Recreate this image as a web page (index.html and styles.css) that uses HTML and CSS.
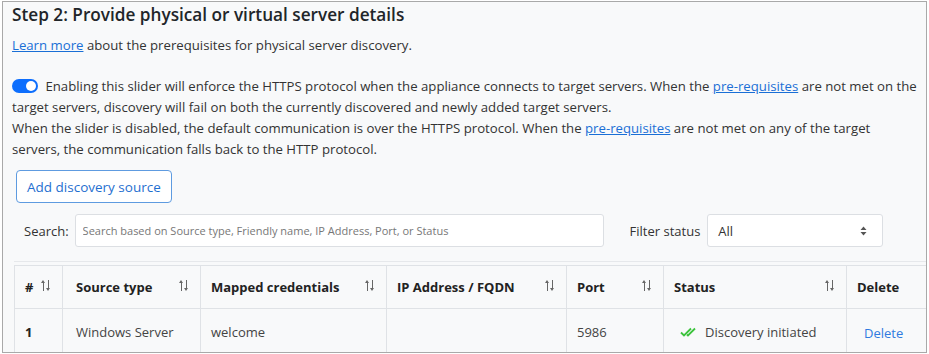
FILE: index.html
```html
<!DOCTYPE html>
<html lang="en">
<head>
    <meta charset="UTF-8">
    <title>Discovery sources</title>
    <link rel="stylesheet" href="styles.css">
</head>
<body>
    <div class="frame">
        <h2 class="step-title">Step 2: Provide physical or virtual server details</h2>
        <p class="learn"><a href="#">Learn more</a> about the prerequisites for physical server discovery.</p>

        <!-- HTTPS slider with its explanation -->
        <p class="slider-text">
            <span class="toggle"><span class="knob"></span></span>
            Enabling this slider will enforce the HTTPS protocol when the appliance connects to target servers. When the <a href="#">pre-requisites</a> are not met on the target servers, discovery will fail on both the currently discovered and newly added target servers.<br>
            When the slider is disabled, the default communication is over the HTTPS protocol. When the <a href="#">pre-requisites</a> are not met on any of the target servers, the communication falls back to the HTTP protocol.
        </p>

        <button class="add-button">Add discovery source</button>

        <div class="search-row">
            <label class="search-label">Search:</label>
            <input class="search-input" type="text" placeholder="Search based on Source type, Friendly name, IP Address, Port, or Status">
            <label class="filter-label">Filter status</label>
            <div class="filter-select">
                <span>All</span>
                <svg width="7" height="10" viewBox="0 0 7 10"><path d="M3.5 0.5 L6.5 4 H0.5 Z M3.5 9.5 L6.5 6 H0.5 Z" fill="#555"/></svg>
            </div>
        </div>

        <div class="table-wrap">
            <table class="sources">
                <thead>
                    <tr>
                        <th class="c-num"># <span class="sort"></span></th>
                        <th class="c-type">Source type <span class="sort"></span></th>
                        <th class="c-cred">Mapped credentials <span class="sort"></span></th>
                        <th class="c-ip">IP Address / FQDN <span class="sort"></span></th>
                        <th class="c-port">Port <span class="sort"></span></th>
                        <th class="c-status">Status <span class="sort"></span></th>
                        <th class="c-del">Delete</th>
                    </tr>
                </thead>
                <tbody>
                    <tr>
                        <td class="num">1</td>
                        <td class="c-type">Windows Server</td>
                        <td>welcome</td>
                        <td></td>
                        <td>5986</td>
                        <td>
                            <span class="status">
                                <svg width="20" height="10" viewBox="0 0 20 10"><path d="M1 5.5 L4 8.5 L11 1.5 M7 7.5 L8 8.5 L15 1.5" fill="none" stroke="#3cc33c" stroke-width="1.8"/></svg>
                                Discovery initiated
                            </span>
                        </td>
                        <td><a href="#" class="del-link">Delete</a></td>
                    </tr>
                </tbody>
            </table>
        </div>
    </div>
</body>
</html>
```

FILE: styles.css
```css
* {
  margin: 0;
  padding: 0;
  box-sizing: border-box;
}

body {
  font-family: "Open Sans", "Noto Sans", sans-serif;
  background-color: #fff;
  color: #333;
}

/* Outer framed panel */
.frame {
  margin: 1px 2px 1px 2px;
  height: 352px;
  border: 1px solid #a9a9a9;
  background-color: #f8f9fa;
  padding: 1px 0 0 9px;
  overflow: hidden;
}

.step-title {
  font-size: 17.2px;
  font-weight: 600;
  color: #212529;
  line-height: 24px;
  white-space: nowrap;
}

.learn {
  font-size: 13.2px;
  margin-top: 9px;
  line-height: 18px;
}

a {
  color: #1a6fd6;
}

.slider-text {
  font-size: 13.2px;
  line-height: 21px;
  margin-top: 22px;
  width: 906px;
  color: #333;
}

.toggle {
  display: inline-block;
  width: 26px;
  height: 14px;
  border-radius: 7px;
  background-color: #0d6efd;
  vertical-align: -2px;
  margin-right: 4px;
  position: relative;
}

.knob {
  position: absolute;
  right: 2px;
  top: 2px;
  width: 10px;
  height: 10px;
  border-radius: 50%;
  background-color: #fff;
}

.add-button {
  margin-top: 10px;
  margin-left: 4px;
  height: 33px;
  padding: 0 10px;
  font-family: inherit;
  font-size: 13.5px;
  color: #1f6fd0;
  background-color: #fff;
  border: 1px solid #5e9be0;
  border-radius: 4px;
}

.search-row {
  display: flex;
  align-items: center;
  margin-top: 11px;
  margin-left: 12px;
}

.search-label,
.filter-label {
  font-size: 13px;
  color: #333;
}

.search-input {
  margin-left: 6px;
  width: 529px;
  height: 33px;
  border: 1px solid #dcdfe3;
  border-radius: 3px;
  background-color: #fff;
  padding: 0 7px;
  font-family: inherit;
  font-size: 11px;
}

.search-input::placeholder {
  color: #777;
}

.filter-label {
  margin-left: 26px;
}

.filter-select {
  margin-left: 7px;
  width: 176px;
  height: 33px;
  border: 1px solid #dcdfe3;
  border-radius: 3px;
  background-color: #fff;
  display: flex;
  align-items: center;
  justify-content: space-between;
  padding: 0 15px 0 10px;
  font-size: 13px;
}

/* Table of discovery sources */
.table-wrap {
  margin-top: 14px;
  margin-left: 2px;
  border-top: 1px solid #e6e8eb;
  padding-top: 3px;
}

.sources {
  border-collapse: collapse;
  font-size: 13px;
  width: 1000px;
  table-layout: fixed;
}

.sources th,
.sources td {
  border: 1px solid #dfe2e6;
  text-align: left;
  padding: 0 10px;
  white-space: nowrap;
}

.sources .c-type {
  padding-left: 13px;
}

.sources th {
  height: 43px;
  font-weight: 700;
  color: #222;
  position: relative;
}

.sources td {
  height: 46px;
  color: #444;
}

.sources td.num {
  font-weight: 700;
  color: #222;
}

.c-num { width: 48px; }
.c-type { width: 138px; }
.c-cred { width: 186px; }
.c-ip { width: 180px; }
.c-port { width: 97px; }
.c-status { width: 183px; }
.c-del { width: 167px; }

.sort {
  position: absolute;
  right: 10px;
  top: 14px;
  width: 11px;
  height: 11px;
  background:
    linear-gradient(#666, #666) 2px 2px / 1px 9px no-repeat,
    linear-gradient(#666, #666) 7px 0 / 1px 9px no-repeat;
}

.sort::before,
.sort::after {
  content: "";
  position: absolute;
  border: 2px solid transparent;
}

.sort::before {
  left: 0;
  top: 0;
  border-bottom: 3px solid #666;
  border-top: 0;
}

.sort::after {
  left: 5px;
  bottom: 0;
  border-top: 3px solid #666;
  border-bottom: 0;
}

.status {
  display: inline-flex;
  align-items: center;
  gap: 5px;
  margin-left: 6px;
}

.del-link {
  text-decoration: none;
  color: #2f7be0;
  margin-left: 7px;
  position: relative;
  top: 1px;
}
```
